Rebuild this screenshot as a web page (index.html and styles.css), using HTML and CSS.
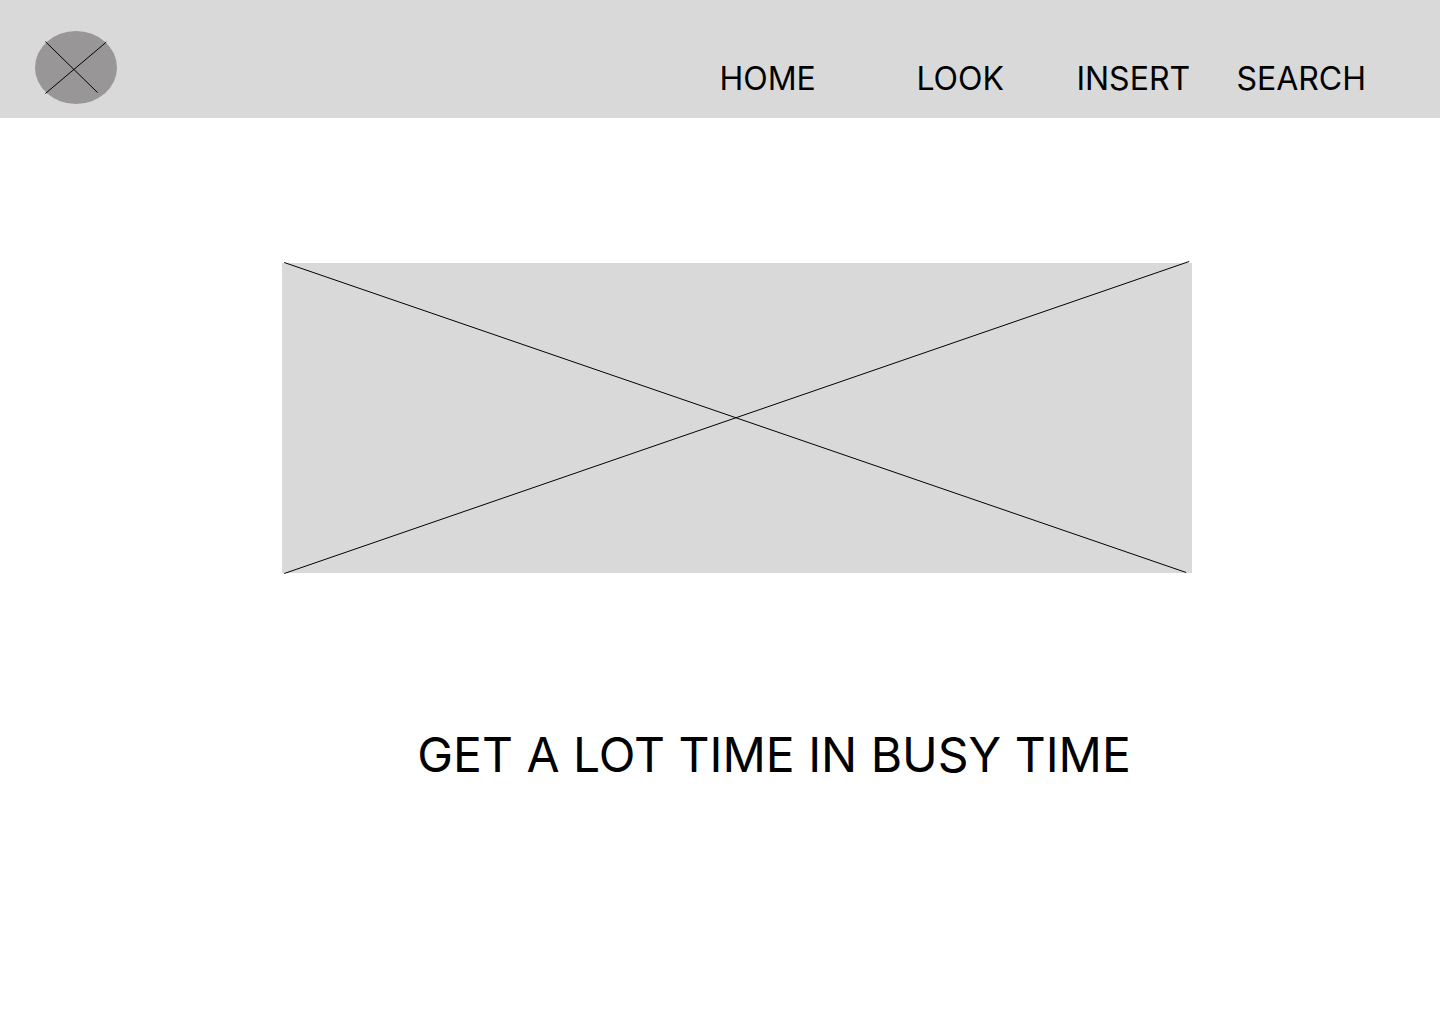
FILE: index.html
```html
<!DOCTYPE html>
<html lang="en">
<head>
<meta charset="utf-8">
<meta name="viewport" content="width=device-width, initial-scale=1">
<title>Home</title>
<link rel="stylesheet" href="styles.css">
</head>
<body>
<header class="site-header">
  <a class="logo" href="#" aria-label="Home">
    <svg width="82" height="74" viewBox="0 0 82 74" aria-hidden="true">
      <ellipse cx="41" cy="37.5" rx="41" ry="36.5" fill="#999697"/>
      <path d="M10.4 11.6L62.6 62.6M10.3 63.6L71.3 12.1" stroke="#000" fill="none"/>
    </svg>
  </a>
  <nav class="site-nav" aria-label="Main">
    <a class="nav-link" href="#">HOME</a>
    <a class="nav-link" href="#">LOOK</a>
    <a class="nav-link" href="#">INSERT</a>
    <a class="nav-link" href="#">SEARCH</a>
  </nav>
</header>
<main class="content">
  <svg class="hero" viewBox="0 0 910 310" role="img" aria-label="Image placeholder">
    <rect width="910" height="310" fill="#d9d9d9"/>
    <path d="M2.2 -0.5L904.2 309.5M2.2 310.5L907.2 -1.5" stroke="#000" fill="none"/>
  </svg>
  <h1 class="tagline">GET A LOT TIME IN BUSY TIME</h1>
</main>
</body>
</html>
```
FILE: styles.css
```css
* {
  box-sizing: border-box;
}

body {
  margin: 0;
  background: #fff;
  color: #000;
  font-family: Inter, sans-serif;
}

.site-header {
  display: flex;
  justify-content: space-between;
  align-items: flex-end;
  padding: 30px 74px 14px 35px;
  background: #d9d9d9;
}

.logo svg {
  display: block;
}

.site-nav {
  display: grid;
  grid-template-columns: 197px 160px 160px auto;
  padding-bottom: 5px;
}

.nav-link {
  color: inherit;
  font-size: 32px;
  line-height: 40px;
  text-decoration: none;
}

.content {
  display: flex;
  flex-direction: column;
  align-items: center;
  padding: 145px 0 0 34px;
}

.hero {
  display: block;
  width: 90%;
  max-width: 910px;
  overflow: visible;
}

.tagline {
  margin: 150px 0 0 74px;
  font-size: 48px;
  font-weight: 400;
  line-height: 64px;
}
```
